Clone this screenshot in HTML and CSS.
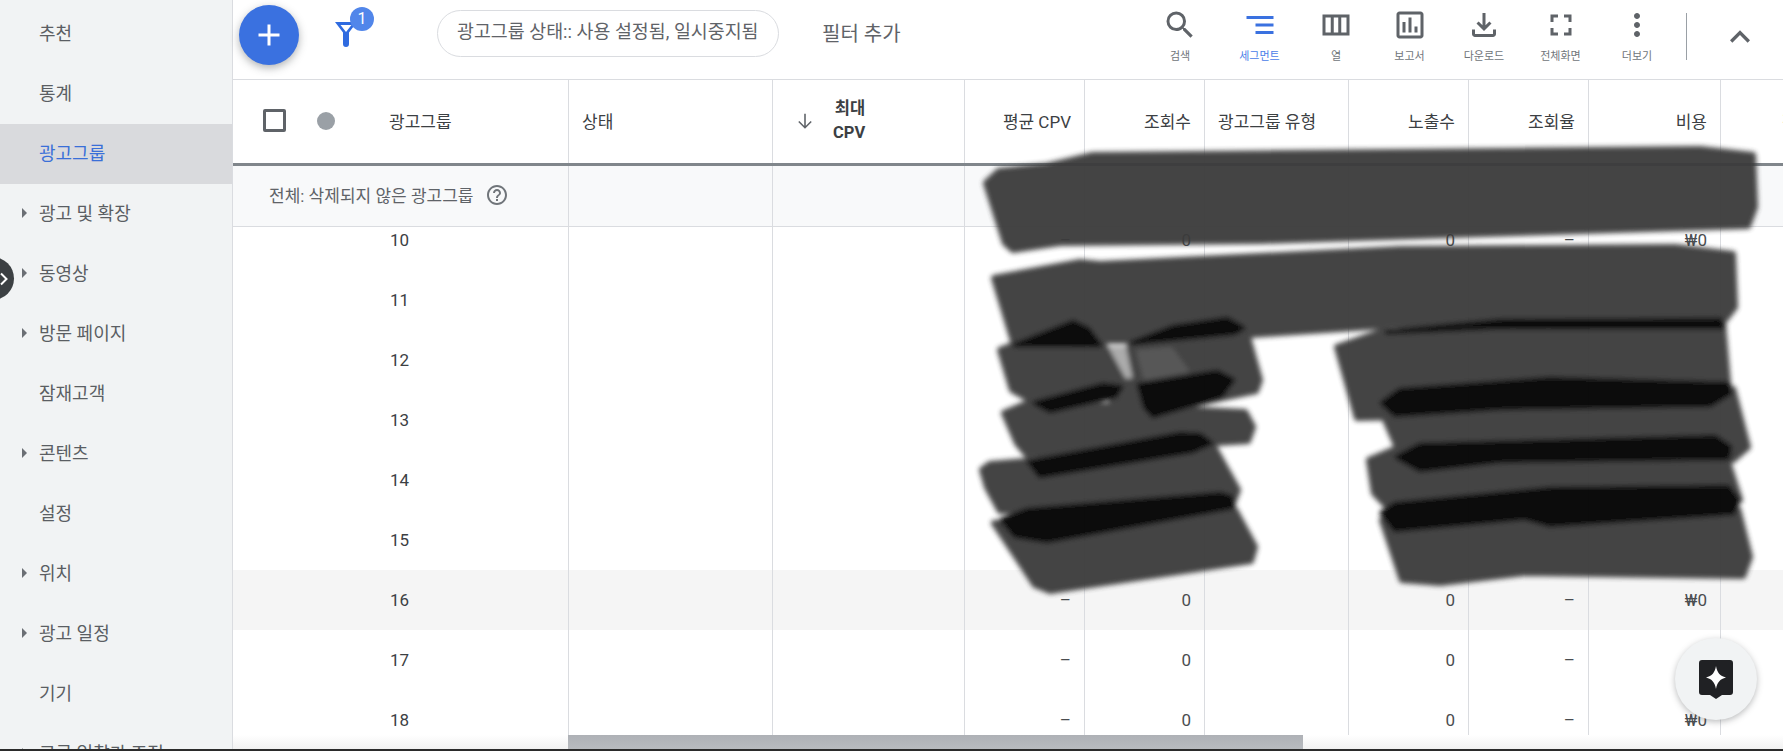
FILE: index.html
```html
<!DOCTYPE html>
<html lang="ko">
<head>
<meta charset="utf-8">
<title>광고그룹</title>
<link rel="stylesheet" href="styles.css">
</head>
<body>
<div class="app">
  <nav class="sidebar">
    <div class="nav-item">추천</div>
    <div class="nav-item">통계</div>
    <div class="nav-item active">광고그룹</div>
    <div class="nav-item more">광고 및 확장</div>
    <div class="nav-item more">동영상</div>
    <div class="nav-item more">방문 페이지</div>
    <div class="nav-item">잠재고객</div>
    <div class="nav-item more">콘텐츠</div>
    <div class="nav-item">설정</div>
    <div class="nav-item more">위치</div>
    <div class="nav-item more">광고 일정</div>
    <div class="nav-item">기기</div>
    <div class="nav-item more">고급 입찰가 조정</div>
  </nav>
  <main class="main">
    <header class="toolbar">
      <button class="fab"><svg viewBox="0 0 24 24" width="36" height="36"><path d="M19 13h-6v6h-2v-6H5v-2h6V5h2v6h6z"/></svg></button>
      <div class="filter">
        <svg viewBox="0 0 22 25" width="22" height="25"><path class="funnel" d="M0 0h22l-8 10.500V22a3 3 0 0 1-6 0V10.500zM5.500 3l5.500 7 5.500-7z"/></svg>
        <span class="badge">1</span>
      </div>
      <div class="chip">광고그룹 상태:: 사용 설정됨, 일시중지됨</div>
      <div class="add-filter">필터 추가</div>
      <div class="tools">
        <div class="tool"><svg viewBox="0 0 24 24"><path d="M15.500 14h-.79l-.28-.27A6.471 6.471 0 0 0 16 9.500 6.500 6.500 0 1 0 9.500 16c1.610 0 3.090-.59 4.230-1.570l.27.28v.79l5 4.990L20.490 19l-4.990-5zm-6 0C7.010 14 5 11.990 5 9.500S7.010 5 9.500 5 14 7.010 14 9.500 11.990 14 9.500 14z"/></svg><span>검색</span></div>
        <div class="tool current"><svg viewBox="0 0 36 36"><path d="M4.500 9h27v3h-27zM13.500 16.500h18v3h-18zM13.500 24h18v3h-18z"/></svg><span>세그먼트</span></div>
        <div class="tool"><svg viewBox="0 0 24 24"><path d="M3 5v14h18V5H3zm10.500 2v10h-3V7h3zM5 7h3.500v10H5V7zm14 10h-3.500V7H19v10z"/></svg><span>열</span></div>
        <div class="tool"><svg viewBox="0 0 24 24"><path d="M19 3H5c-1.100 0-2 .9-2 2v14c0 1.100.9 2 2 2h14c1.100 0 2-.9 2-2V5c0-1.100-.9-2-2-2zm0 16H5V5h14v14zM7 10h2v7H7zm4-3h2v10h-2zm4 6h2v4h-2z"/></svg><span>보고서</span></div>
        <div class="tool"><svg viewBox="0 0 24 24"><path d="M18 15v3H6v-3H4v3c0 1.100.9 2 2 2h12c1.100 0 2-.9 2-2v-3h-2zm-1-4l-1.410-1.410L13 12.170V4h-2v8.170L8.410 9.590 7 11l5 5 5-5z"/></svg><span>다운로드</span></div>
        <div class="tool"><svg viewBox="0 0 24 24"><path d="M7 14H5v5h5v-2H7v-3zm-2-4h2V7h3V5H5v5zm12 7h-3v2h5v-5h-2v3zM14 5v2h3v3h2V5h-5z"/></svg><span>전체화면</span></div>
        <div class="tool"><svg viewBox="0 0 24 24"><path d="M12 8c1.100 0 2-.9 2-2s-.9-2-2-2-2 .9-2 2 .9 2 2 2zm0 2c-1.100 0-2 .9-2 2s.9 2 2 2 2-.9 2-2-.9-2-2-2zm0 6c-1.100 0-2 .9-2 2s.9 2 2 2 2-.9 2-2-.9-2-2-2z"/></svg><span>더보기</span></div>
      </div>
      <div class="tool-divider"></div>
      <svg class="collapse" viewBox="0 0 24 24"><path d="M12 8l-6 6 1.410 1.410L12 10.830l4.590 4.580L18 14z"/></svg>
    </header>

    <section class="table">
      <div class="row head">
        <div class="cell name-head">
          <span class="checkbox"></span>
          <span class="dot"></span>
          <span class="name-label">광고그룹</span>
        </div>
        <div class="cell">상태</div>
        <div class="cell sort-head">
          <svg viewBox="0 0 16 16" width="18" height="18"><path d="M8 1.500v12.500M2.500 8.500L8 14l5.500-5.500"/></svg>
          <span class="sort-label">최대<br>CPV</span>
        </div>
        <div class="cell num">평균 CPV</div>
        <div class="cell num">조회수</div>
        <div class="cell">광고그룹 유형</div>
        <div class="cell num">노출수</div>
        <div class="cell num">조회율</div>
        <div class="cell num">비용</div>
        <div class="cell next-head">전환수</div>
      </div>

      <div class="row summary">
        <div class="cell summary-name">전체: 삭제되지 않은 광고그룹
          <svg viewBox="0 0 24 24" width="24" height="24"><path d="M11 18h2v-2h-2v2zm1-16C6.480 2 2 6.480 2 12s4.480 10 10 10 10-4.480 10-10S17.520 2 12 2zm0 18c-4.410 0-8-3.590-8-8s3.590-8 8-8 8 3.590 8 8-3.590 8-8 8zm0-14c-2.210 0-4 1.790-4 4h2c0-1.100.9-2 2-2s2 .9 2 2c0 2-3 1.750-3 5h2c0-2.250 3-2.500 3-5 0-2.210-1.790-4-4-4z"/></svg>
        </div>
        <div class="cell"></div><div class="cell"></div><div class="cell"></div><div class="cell"></div><div class="cell"></div><div class="cell"></div><div class="cell"></div><div class="cell"></div><div class="cell"></div>
      </div>

      <div class="row data clipped">
        <div class="cell id">10</div><div class="cell"></div><div class="cell"></div><div class="cell num">–</div><div class="cell num">0</div><div class="cell"></div><div class="cell num">0</div><div class="cell num">–</div><div class="cell num">₩0</div><div class="cell"></div>
      </div>
      <div class="row data">
        <div class="cell id">11</div><div class="cell"></div><div class="cell"></div><div class="cell"></div><div class="cell"></div><div class="cell"></div><div class="cell"></div><div class="cell"></div><div class="cell"></div><div class="cell"></div>
      </div>
      <div class="row data">
        <div class="cell id">12</div><div class="cell"></div><div class="cell"></div><div class="cell"></div><div class="cell"></div><div class="cell"></div><div class="cell"></div><div class="cell"></div><div class="cell"></div><div class="cell"></div>
      </div>
      <div class="row data">
        <div class="cell id">13</div><div class="cell"></div><div class="cell"></div><div class="cell"></div><div class="cell"></div><div class="cell"></div><div class="cell"></div><div class="cell"></div><div class="cell"></div><div class="cell"></div>
      </div>
      <div class="row data">
        <div class="cell id">14</div><div class="cell"></div><div class="cell"></div><div class="cell"></div><div class="cell"></div><div class="cell"></div><div class="cell"></div><div class="cell"></div><div class="cell"></div><div class="cell"></div>
      </div>
      <div class="row data">
        <div class="cell id">15</div><div class="cell"></div><div class="cell"></div><div class="cell"></div><div class="cell"></div><div class="cell"></div><div class="cell"></div><div class="cell"></div><div class="cell"></div><div class="cell"></div>
      </div>
      <div class="row data hover">
        <div class="cell id">16</div><div class="cell"></div><div class="cell"></div><div class="cell num">–</div><div class="cell num">0</div><div class="cell"></div><div class="cell num">0</div><div class="cell num">–</div><div class="cell num">₩0</div><div class="cell"></div>
      </div>
      <div class="row data">
        <div class="cell id">17</div><div class="cell"></div><div class="cell"></div><div class="cell num">–</div><div class="cell num">0</div><div class="cell"></div><div class="cell num">0</div><div class="cell num">–</div><div class="cell num">₩0</div><div class="cell"></div>
      </div>
      <div class="row data">
        <div class="cell id">18</div><div class="cell"></div><div class="cell"></div><div class="cell num">–</div><div class="cell num">0</div><div class="cell"></div><div class="cell num">0</div><div class="cell num">–</div><div class="cell num">₩0</div><div class="cell"></div>
      </div>
    </section>

    <div class="hscroll"><div class="hscroll-thumb"></div></div>
  </main>
</div>
<div class="bottom-edge"></div>

<div class="nav-toggle"><svg viewBox="0 0 8 14" width="8" height="14"><path d="M1 1.500L6.500 7 1 12.500"/></svg></div>

<div class="assistant">
  <svg viewBox="0 0 34 40" width="34" height="40">
    <path class="assistant-bubble" d="M3 1h28a3 3 0 0 1 3 3v29a3 3 0 0 1-3 3h-8l-6 4-6-4H3a3 3 0 0 1-3-3V4a3 3 0 0 1 3-3z"/>
    <path class="assistant-star" d="M17 7c1 6.500 4 10 10 11.500C21 20 18 23.500 17 30c-1-6.500-4-10-10-11.500C13 17 16 13.500 17 7z"/>
  </svg>
</div>

<svg class="redaction" viewBox="0 0 1783 751" width="1783" height="751" aria-hidden="true">
  <defs><filter id="smear" x="-5%" y="-5%" width="110%" height="110%"><feGaussianBlur stdDeviation="2.400"/></filter></defs>
  <g class="marks" filter="url(#smear)">
    <path class="ink-pale" d="M1105 346L1132 346 1140 381 1120 383z"/>
    <path class="ink" d="M986 183L999 171 1047 166 1093 155 1700 149 1753 155 1755 207 1748 226 1450 235 1260 241 1060 243 1013 250 1005 243z"/>
    <path class="ink" d="M994 278L1080 262 1100 264 1400 249 1675 247 1733 254 1735 307 1725 320 1400 325 1250 335 1127 341 1013 341z"/>
    <path class="ink" d="M1000 350L1020 342 1105 347 1123 380 1030 400 1012 390z"/>
    <path class="ink" d="M1129 347L1248 337 1260 380 1256 391 1150 413 1137 385z"/>
    <path class="ink-soft" d="M1136 350L1172 347 1190 372 1144 380z"/>
    <path class="ink" d="M1108 384L1140 380 1150 405 1112 402z"/>
    <path class="ink" d="M1004 413L1030 402 1245 412 1253 427 1248 441 1027 455 1017 443z"/>
    <path class="ink" d="M982 470L990 464 1213 445 1238 490 1231 508 1000 511 987 487z"/>
    <path class="ink" d="M994 523L1235 510 1255 547 1251 561 1050 591 1035 585z"/>
    <path class="ink" d="M1337 347L1380 332 1723 324 1728 383 1500 415 1357 418z"/>
    <path class="ink" d="M1384 417L1733 389 1748 447 1733 460 1397 447z"/>
    <path class="ink" d="M1369 460L1395 449 1728 462 1740 500 1395 515 1374 493z"/>
    <path class="ink" d="M1382 520L1738 509 1750 557 1743 576 1525 573 1440 583 1402 580z"/>
    <path class="ink-dark" d="M1015 345L1073 322 1088 329 1100 345z"/>
    <path class="ink-dark" d="M1132 343L1173 327 1227 319 1243 328 1235 333z"/>
    <path class="ink-dark" d="M1035 403L1103 385 1121 387 1115 396 1050 411z"/>
    <path class="ink-dark" d="M1139 385L1217 372 1233 380 1221 396 1153 416 1145 407z"/>
    <path class="ink-dark" d="M1029 462L1180 434 1200 435 1211 443 1193 451 1040 476z"/>
    <path class="ink-dark" d="M1002 520L1027 510 1220 494 1231 497 1233 507 1047 541 1015 536z"/>
    <path class="ink-dark" d="M1387 332L1500 321 1720 320 1723 327 1500 327z"/>
    <path class="ink-dark" d="M1382 403L1400 390 1550 379 1728 384 1730 393 1710 405 1500 408 1395 415z"/>
    <path class="ink-dark" d="M1397 457L1420 445 1715 437 1730 447 1728 458 1500 461 1420 470z"/>
    <path class="ink-dark" d="M1382 513L1395 504 1550 489 1728 487 1738 500 1733 513 1550 525 1525 518 1395 530z"/>
  </g>
</svg>
</body>
</html>
```

FILE: styles.css
```css
* { box-sizing: border-box; }

html, body {
  margin: 0;
  height: 751px;
  overflow: hidden;
  background: #fff;
  font-family: Roboto, "Noto Sans CJK KR", sans-serif;
  color: #3c4043;
}

.app {
  display: flex;
  height: 749px;
  overflow: hidden;
}

.bottom-edge {
  height: 2px;
  background: #2b2b2b;
}

/* Sidebar */
.sidebar {
  flex: 0 0 233px;
  padding-top: 4px;
  background: #f1f3f4;
  border-right: 1px solid #dadce0;
  overflow: hidden;
}

.nav-item {
  position: relative;
  display: flex;
  align-items: center;
  height: 60px;
  padding: 0 0 4px 39px;
  font-size: 18px;
  color: #5a5e63;
}

.nav-item.active {
  background: #d9dadd;
  color: #3a6fd8;
}

.nav-item.more::before {
  content: "";
  position: absolute;
  left: 22px;
  top: 24px;
  border-style: solid;
  border-width: 5px 0 5px 5px;
  border-color: transparent transparent transparent #6b6f74;
}

/* Main column */
.main {
  flex: 1;
  min-width: 0;
  display: flex;
  flex-direction: column;
}

.toolbar {
  flex: 0 0 80px;
  display: flex;
  align-items: flex-start;
  border-bottom: 1px solid #dadce0;
}

.fab {
  flex: 0 0 60px;
  width: 60px;
  height: 60px;
  margin: 5px 0 0 6px;
  padding: 0;
  display: flex;
  align-items: center;
  justify-content: center;
  border: 0;
  border-radius: 50%;
  background: #3a71e0;
  box-shadow: 0 3px 8px rgba(60, 64, 67, .4);
}

.fab svg { fill: #fff; }

.filter {
  position: relative;
  width: 22px;
  height: 25px;
  margin: 22px 0 0 36px;
}

.funnel {
  fill: #2f6be0;
  fill-rule: evenodd;
}

.badge {
  position: absolute;
  left: 15px;
  top: -15px;
  width: 24px;
  height: 24px;
  border-radius: 50%;
  background: #5186ea;
  color: #fff;
  font-size: 16px;
  line-height: 24px;
  text-align: center;
}

.chip {
  width: 342px;
  height: 47px;
  margin: 10px 0 0 80px;
  padding-left: 19px;
  border: 1.500px solid #dadce0;
  border-radius: 24px;
  font-size: 18.400px;
  line-height: 41px;
  color: #5f6368;
  white-space: nowrap;
}

.add-filter {
  margin: 21px 0 0 43px;
  font-size: 20px;
  line-height: 26px;
  color: #5f6368;
  white-space: nowrap;
}

.tools {
  margin-left: auto;
  display: grid;
  grid-template-columns: 80px 79px 74px 73px 76px 77px 76px;
}

.tool {
  display: flex;
  flex-direction: column;
  align-items: center;
  padding-top: 7px;
  font-size: 11px;
  line-height: 14px;
  color: #70757a;
}

.tool svg {
  width: 36px;
  height: 36px;
  margin-bottom: 7px;
  fill: #5f6368;
}

.tool.current { color: #4a80e8; }
.tool.current svg { fill: #3a71e0; }

.tool-divider {
  width: 1px;
  height: 47px;
  margin: 13px 0 0 11px;
  background: #9aa0a6;
}

.collapse {
  width: 40px;
  height: 40px;
  margin: 17px 23px 0 33px;
  fill: #5f6368;
}

/* Table */
.table {
  flex: 1;
  min-height: 0;
  overflow: hidden;
}

.row {
  display: grid;
  grid-template-columns: 335px 204px 192px 120px 120px 144px 120px 120px 132px 63px;
}

.cell {
  display: flex;
  align-items: center;
  min-width: 0;
  padding: 0 13px;
  border-left: 1px solid #dadce0;
  white-space: nowrap;
}

.cell:first-child { border-left: 0; }
.cell.num { justify-content: flex-end; }

.head {
  height: 86px;
  border-bottom: 3px solid #80868b;
  font-size: 17px;
  color: #3c4043;
}

.head .cell { padding-bottom: 2px; }

.name-head { padding: 0 0 0 30px; }

.checkbox {
  width: 23px;
  height: 23px;
  border: 3px solid #5f6368;
  border-radius: 2px;
}

.dot {
  width: 18px;
  height: 18px;
  margin-left: 31px;
  border-radius: 50%;
  background: #9aa0a6;
}

.name-label { margin-left: 54px; }

.sort-head {
  padding-left: 23px;
  gap: 19px;
}

.sort-head svg {
  fill: none;
  stroke: #5f6368;
  stroke-width: 1.400;
}

.sort-label {
  font-size: 16.500px;
  font-weight: 700;
  line-height: 24px;
  text-align: right;
}

.next-head {
  padding-left: 61px;
  overflow: hidden;
}

.summary {
  height: 61px;
  background: #f8f9fa;
  border-bottom: 1px solid #dadce0;
}

.summary-name {
  padding: 0 0 3px 36px;
  gap: 12px;
  font-size: 17px;
  color: #5f6368;
}

.summary-name svg { fill: #70757a; }

.data {
  height: 60px;
  font-size: 17px;
  color: #4a4d50;
}

.data.clipped {
  height: 43px;
}

.data.clipped .cell { padding-bottom: 18px; }

.data.hover { background: #f5f5f5; }

.data .cell.id {
  padding-left: 157px;
  color: #3c4043;
}

/* Horizontal scrollbar */
.hscroll {
  flex: 0 0 14px;
  padding-left: 335px;
  background: linear-gradient(#fff, #f1f1f1);
}

.hscroll-thumb {
  width: 735px;
  height: 100%;
  background: linear-gradient(#aeb1b6, #b8bbbf);
}

/* Floating pieces */
.nav-toggle {
  position: absolute;
  left: -29px;
  top: 257px;
  width: 43px;
  height: 43px;
  padding-left: 29px;
  display: flex;
  align-items: center;
  border-radius: 50%;
  background: #3c4043;
}

.nav-toggle svg {
  fill: none;
  stroke: #fff;
  stroke-width: 2;
}

.assistant {
  position: absolute;
  left: 1675px;
  top: 638px;
  width: 82px;
  height: 82px;
  display: flex;
  align-items: center;
  justify-content: center;
  border-radius: 50%;
  background: #f1f3f4;
  box-shadow: 0 2px 6px rgba(60, 64, 67, .35);
}

.assistant-bubble { fill: #202124; }
.assistant-star { fill: #fff; }

.redaction {
  position: absolute;
  left: 0;
  top: 0;
  pointer-events: none;
}

.marks { opacity: .95; }

.ink {
  fill: #3a3a3a;
  stroke: #3a3a3a;
  stroke-width: 6;
  stroke-linejoin: round;
}

.ink-soft { fill: #4f4f4f; }
.ink-pale { fill: #a8a8a8; }

.ink-dark {
  fill: #050505;
  stroke: #050505;
  stroke-width: 5;
  stroke-linejoin: round;
}
```
